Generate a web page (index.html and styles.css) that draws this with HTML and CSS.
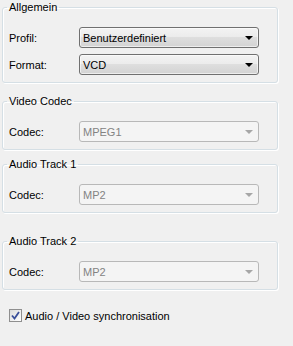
FILE: index.html
```html
<!DOCTYPE html>
<html lang="de">
<head>
    <meta charset="UTF-8">
    <title>Profil</title>
    <link rel="stylesheet" href="styles.css">
</head>
<body>
    <fieldset class="group group-general">
        <legend>Allgemein</legend>
        <div class="row">
            <span class="label">Profil:</span>
            <div class="combo">
                <span class="combo-text">Benutzerdefiniert</span>
                <span class="arrow"></span>
            </div>
        </div>
        <div class="row">
            <span class="label">Format:</span>
            <div class="combo">
                <span class="combo-text">VCD</span>
                <span class="arrow"></span>
            </div>
        </div>
    </fieldset>

    <fieldset class="group group-video">
        <legend>Video Codec</legend>
        <div class="row">
            <span class="label">Codec:</span>
            <div class="combo disabled">
                <span class="combo-text">MPEG1</span>
                <span class="arrow"></span>
            </div>
        </div>
    </fieldset>

    <fieldset class="group group-audio1">
        <legend>Audio Track 1</legend>
        <div class="row">
            <span class="label">Codec:</span>
            <div class="combo disabled">
                <span class="combo-text">MP2</span>
                <span class="arrow"></span>
            </div>
        </div>
    </fieldset>

    <fieldset class="group group-audio2">
        <legend>Audio Track 2</legend>
        <div class="row">
            <span class="label">Codec:</span>
            <div class="combo disabled">
                <span class="combo-text">MP2</span>
                <span class="arrow"></span>
            </div>
        </div>
    </fieldset>

    <label class="check">
        <span class="box">
            <svg width="9" height="9" viewBox="0 0 9 9">
                <path d="M1 4.5 L3.5 7.5 L8 1" fill="none" stroke="#3a4f9a" stroke-width="1.8"/>
            </svg>
        </span>
        Audio / Video synchronisation
    </label>
</body>
</html>
```

FILE: styles.css
```css
html, body {
    margin: 0;
    background-color: #f0f0f0;
}

body {
    width: 293px;
    height: 346px;
    padding: 0 0 0 2px;
    box-sizing: border-box;
    font-family: "Liberation Sans", Arial, sans-serif;
    font-size: 11px;
    color: #000;
}

.group {
    width: 276px;
    box-sizing: border-box;
    margin: 0;
    padding: 13px 18px 7px 6px;
    border: 1px solid #d5dfe5;
    border-radius: 3px;
    box-shadow: inset 1px 1px 0 #fff, 1px 1px 0 #fff;
}

.group legend {
    padding: 0 2px;
    margin-left: -2px;
    line-height: 14px;
}

.group-video {
    margin-top: 11px;
}

.group-audio1 {
    margin-top: 7px;
}

.group-audio2 {
    margin-top: 21px;
}

.row {
    display: flex;
    align-items: center;
    height: 21px;
}

.row + .row {
    margin-top: 6px;
}

.label {
    width: 70px;
    flex: none;
}

.combo {
    flex: none;
    width: 180px;
    height: 21px;
    box-sizing: border-box;
    display: flex;
    align-items: center;
    justify-content: space-between;
    padding: 0 5px 0 3px;
    border: 1px solid #707070;
    border-radius: 3px;
    background: linear-gradient(#f3f3f3 0%, #ebebeb 50%, #dedede 50%, #d3d3d3 100%);
    box-shadow: inset 0 0 0 1px rgba(255, 255, 255, 0.6);
}

.arrow {
    width: 0;
    height: 0;
    border-left: 4px solid transparent;
    border-right: 4px solid transparent;
    border-top: 4px solid #000;
}

.combo.disabled {
    border-color: #b8b8b8;
    background: #f4f4f4;
    box-shadow: none;
    color: #838383;
}

.combo.disabled .arrow {
    border-top-color: #a6a6a6;
}

.check {
    display: flex;
    align-items: center;
    margin: 19px 0 0 7px;
    height: 13px;
}

.box {
    width: 13px;
    height: 13px;
    box-sizing: border-box;
    margin-right: 3px;
    border: 1px solid #8f8f8f;
    background: linear-gradient(135deg, #dcdcdc, #ffffff);
    display: flex;
    align-items: center;
    justify-content: center;
}
```
